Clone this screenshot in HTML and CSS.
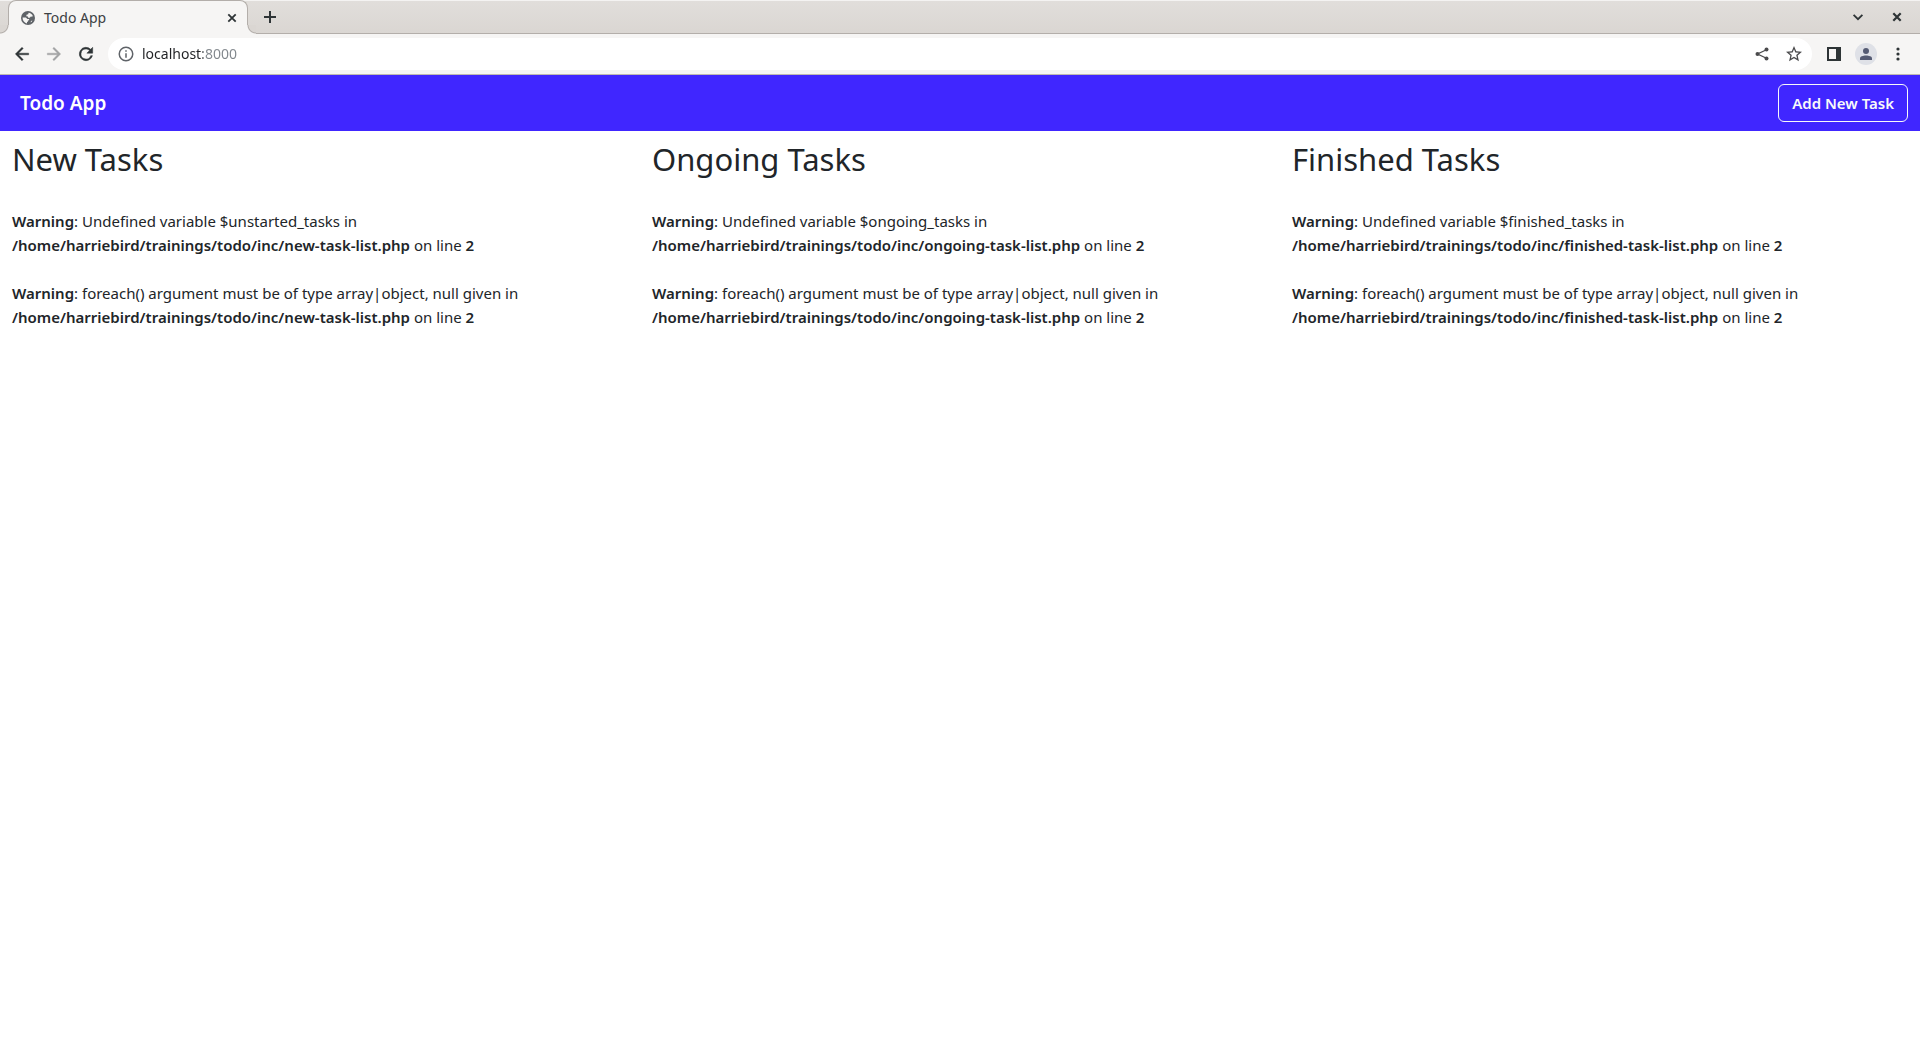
FILE: index.html
```html
<!DOCTYPE html>
<html lang="en">
<head>
<meta charset="utf-8">
<title>Todo App</title>
<link rel="stylesheet" href="styles.css">
</head>
<body>
<div class="browser">
  <div class="tab-strip">
    <div class="tab">
      <svg class="icon-14" viewBox="0 0 14 14" aria-hidden="true"><circle cx="7" cy="7" r="7" fill="#5f6368"/><path d="M7.600 1.700c1.800.2 3.300 1.300 4.100 2.900l-.4 1.200-1.500-.2-1 1.200H7.200L6.900 5.600 5.300 5.300 5.500 3.800 7.200 3.200zM1.600 6.400h3.200l1.700 1.500h1.600v1.400l-1.200.3v1.200l-.9.2v1.400C3.600 12 1.600 9.700 1.600 7zM9.700 11.600l.2-1.700 1.500-.3c-.4.900-1 1.500-1.700 2z" fill="#f6f5f4"/></svg>
      <span class="tab-title">Todo App</span>
      <button class="icon-button" aria-label="Close tab"><svg class="icon-14" viewBox="0 0 14 14"><path d="M3.300 3.300l7.400 7.400M10.700 3.300l-7.400 7.400" stroke="#2e3436" stroke-width="1.800"/></svg></button>
    </div>
    <button class="icon-button new-tab" aria-label="New tab"><svg class="icon-14" viewBox="0 0 14 14"><path d="M7 1v12M1 7h12" stroke="#2e3436" stroke-width="2"/></svg></button>
    <div class="window-controls">
      <button class="icon-button" aria-label="Search tabs"><svg class="icon-14" viewBox="0 0 14 14"><path d="M2.600 4.800L7 9.200l4.400-4.400" fill="none" stroke="#2e3436" stroke-width="1.800"/></svg></button>
      <button class="icon-button" aria-label="Close window"><svg class="icon-14" viewBox="0 0 14 14"><path d="M3.300 3.300l7.400 7.400M10.700 3.300l-7.400 7.400" stroke="#2e3436" stroke-width="2.200"/></svg></button>
    </div>
  </div>
  <div class="toolbar">
    <div class="nav-buttons">
      <button class="icon-button" aria-label="Back"><svg class="icon-20" viewBox="0 0 24 24"><path fill="#2e3436" d="M20 11H7.830l5.590-5.590L12 4l-8 8 8 8 1.410-1.410L7.830 13H20z" stroke="#2e3436" stroke-width=".5"/></svg></button>
      <button class="icon-button" aria-label="Forward" disabled><svg class="icon-20" viewBox="0 0 24 24"><path fill="#a2a3a4" d="M4 11h12.170l-5.590-5.590L12 4l8 8-8 8-1.410-1.410L16.170 13H4z" stroke="#a2a3a4" stroke-width=".5"/></svg></button>
      <button class="icon-button" aria-label="Reload"><svg class="icon-20" viewBox="0 0 24 24"><path fill="#2e3436" d="M17.650 6.350A8 8 0 1 0 19.730 14h-2.080A6 6 0 1 1 12 6c1.660 0 3.140.69 4.220 1.780L13 11h7V4z" stroke="#2e3436" stroke-width=".6"/></svg></button>
    </div>
    <div class="address-bar">
      <svg class="icon-18" viewBox="0 0 24 24" aria-hidden="true"><path fill="#5f6368" d="M11 7h2v2h-2zm0 4h2v6h-2zm1-9a10 10 0 1 0 0 20 10 10 0 0 0 0-20zm0 18a8 8 0 1 1 0-16 8 8 0 0 1 0 16z"/></svg>
      <input class="address" type="text" value="localhost:8000" aria-label="Address">
      <button class="icon-button" aria-label="Share"><svg class="icon-16" viewBox="0 0 16 16"><path d="M13 3.500L3.500 8l9.500 4.500" fill="none" stroke="#4a4a4c" stroke-width="1.300"/><circle cx="12.500" cy="3.500" r="2" fill="#4a4a4c"/><circle cx="3.500" cy="8" r="2" fill="#4a4a4c"/><circle cx="12.500" cy="12.500" r="2" fill="#4a4a4c"/></svg></button>
      <button class="icon-button" aria-label="Bookmark this page"><svg class="icon-16" viewBox="2 2 20 20"><path fill="#4a4a4c" d="M22 9.240l-7.190-.62L12 2 9.190 8.630 2 9.240l5.460 4.730L5.820 21 12 17.270 18.180 21l-1.630-7.030zM12 15.400l-3.760 2.270 1-4.280-3.320-2.880 4.380-.38L12 6.100l1.710 4.040 4.380.38-3.320 2.880 1 4.280z"/></svg></button>
    </div>
    <div class="toolbar-end">
      <button class="icon-button" aria-label="Side panel"><svg class="icon-14" viewBox="0 0 14 14"><path d="M1 1h12v12H1z" fill="none" stroke="#2e3436" stroke-width="2"/><path d="M9 1h4v12H9z" fill="#2e3436"/></svg></button>
      <button class="icon-button profile" aria-label="Profile"><svg class="icon-14" viewBox="0 0 14 14"><circle cx="7" cy="4" r="3" fill="#555b73"/><path d="M1 13v-1.500C1 9.500 4 8.600 7 8.600s6 .9 6 2.900V13z" fill="#555b73"/></svg></button>
      <button class="icon-button" aria-label="Menu"><svg class="icon-14" viewBox="0 0 14 14"><g fill="#2e3436"><circle cx="7" cy="2" r="1.600"/><circle cx="7" cy="7" r="1.600"/><circle cx="7" cy="12" r="1.600"/></g></svg></button>
    </div>
  </div>
</div>
<header class="navbar">
  <a class="brand" href="#">Todo App</a>
  <button class="add-task">Add New Task</button>
</header>
<main class="board">
  <section class="column">
    <h2>New Tasks</h2>
    <p><b>Warning</b>: Undefined variable $unstarted_tasks in <b>/home/harriebird/trainings/todo/inc/new-task-list.php</b> on line <b>2</b></p>
    <p><b>Warning</b>: foreach() argument must be of type array|object, null given in <b>/home/harriebird/trainings/todo/inc/new-task-list.php</b> on line <b>2</b></p>
  </section>
  <section class="column">
    <h2>Ongoing Tasks</h2>
    <p><b>Warning</b>: Undefined variable $ongoing_tasks in <b>/home/harriebird/trainings/todo/inc/ongoing-task-list.php</b> on line <b>2</b></p>
    <p><b>Warning</b>: foreach() argument must be of type array|object, null given in <b>/home/harriebird/trainings/todo/inc/ongoing-task-list.php</b> on line <b>2</b></p>
  </section>
  <section class="column">
    <h2>Finished Tasks</h2>
    <p><b>Warning</b>: Undefined variable $finished_tasks in <b>/home/harriebird/trainings/todo/inc/finished-task-list.php</b> on line <b>2</b></p>
    <p><b>Warning</b>: foreach() argument must be of type array|object, null given in <b>/home/harriebird/trainings/todo/inc/finished-task-list.php</b> on line <b>2</b></p>
  </section>
</main>
</body>
</html>
```
FILE: styles.css
```css
* { box-sizing: border-box; }

body {
  margin: 0;
  background: #fff;
  color: #212529;
  font: 15px/24px "Noto Sans", sans-serif;
}

button, input { font: inherit; }
b { font-weight: 600; }
svg { display: block; }

.icon-14 { width: 14px; height: 14px; }
.icon-16 { width: 16px; height: 16px; }
.icon-18 { width: 18px; height: 18px; }
.icon-20 { width: 20px; height: 20px; }

.icon-button {
  display: flex;
  padding: 0;
  border: 0;
  background: none;
}

/* Browser window */
.browser {
  background: #f6f5f4;
  border-bottom: 1px solid #bfb8b1;
}

.tab-strip {
  display: flex;
  align-items: center;
  height: 34px;
  padding-left: 8px;
  background: linear-gradient(#f4f3f2 1px, #e1dedb 1px, #dad6d2);
  box-shadow: inset 0 -1px #b3aeaa;
}

.tab {
  position: relative;
  display: flex;
  align-items: center;
  gap: 9px;
  width: 240px;
  height: 34px;
  padding: 0 8px 0 12px;
  background: #f6f5f4;
  border: 1px solid #b3aeaa;
  border-bottom: 0;
  border-radius: 8px 8px 0 0;
  color: #3c4043;
  font-size: 14px;
}

/* Curved feet where the tab meets the toolbar */
.tab::before,
.tab::after {
  content: "";
  position: absolute;
  bottom: 0;
  width: 9px;
  height: 9px;
}

.tab::before {
  left: -9px;
  background: radial-gradient(circle at 0 0, #dad6d2 7px, #b3aeaa 8px, #f6f5f4 9px);
}

.tab::after {
  right: -9px;
  background: radial-gradient(circle at 100% 0, #dad6d2 7px, #b3aeaa 8px, #f6f5f4 9px);
}

.tab-title { flex: 1; }
.new-tab { margin-left: 15px; }

.window-controls {
  display: flex;
  gap: 25px;
  margin-left: auto;
  padding-right: 16px;
}

.toolbar {
  display: flex;
  align-items: center;
  height: 40px;
  padding: 0 15px 0 12px;
}

.nav-buttons {
  display: flex;
  gap: 12px;
  margin-right: 12px;
}

.address-bar {
  display: flex;
  flex: 1;
  align-items: center;
  gap: 16px;
  height: 32px;
  padding: 0 10px 0 9px;
  background: #fff;
  border-radius: 16px;
}

/* The host is dark and the port is grey */
.address {
  flex: 1;
  min-width: 0;
  height: 24px;
  margin-left: -9px;
  padding: 0;
  border: 0;
  outline: 0;
  background: linear-gradient(90deg, #202124 61px, #80868b 61px) text;
  color: transparent;
  font-size: 14px;
}

.toolbar-end {
  display: flex;
  align-items: center;
  gap: 14px;
  margin-left: 15px;
}

.profile {
  padding: 4px;
  background: #dfe1e7;
  border-radius: 50%;
}

/* Todo page */
.navbar {
  display: flex;
  align-items: center;
  justify-content: space-between;
  padding: 9px 12px 9px 20px;
  background: #4026ff;
}

.brand {
  color: #fff;
  font-size: 19px;
  font-weight: 600;
  text-decoration: none;
}

.add-task {
  padding: 6px 13px;
  background: none;
  border: 1px solid #f8f9fa;
  border-radius: 6px;
  color: #f8f9fa;
  font-weight: 600;
}

.board {
  display: grid;
  grid-template-columns: repeat(3, 1fr);
  padding-top: 8px;
}

.column { padding: 0 12px; }

h2 {
  margin: 0 0 30px;
  font-size: 31px;
  font-weight: 400;
  line-height: 40px;
}

p {
  max-width: 528px;
  margin: 0 0 24px;
}
```
